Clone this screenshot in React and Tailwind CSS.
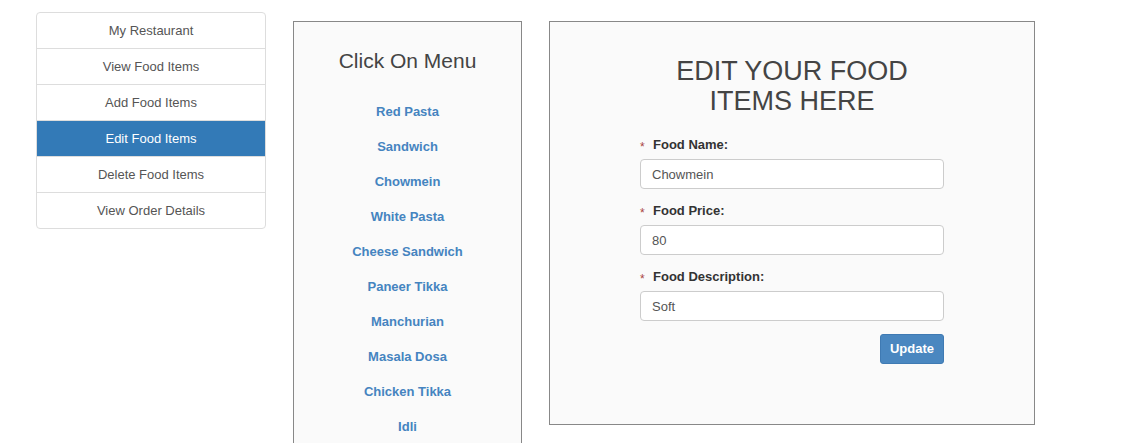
const navItems = ["My Restaurant", "View Food Items", "Add Food Items", "Edit Food Items", "Delete Food Items", "View Order Details"];

const menuItems = ["Red Pasta", "Sandwich", "Chowmein", "White Pasta", "Cheese Sandwich", "Paneer Tikka", "Manchurian", "Masala Dosa", "Chicken Tikka", "Idli"];

const Field = ({ label, value }) => {
  return (
    <div className="mb-[13px]">
      <label className="flex items-center h-[18px] mb-[5px] text-[13px] font-bold text-[#333]">
        <span className="text-[#a94442] font-normal w-[13px] text-[12px] leading-none mt-[3px]">*</span>
        {label}
      </label>
      <input
        readOnly
        value={value}
        className="w-[304px] h-[30px] px-[11px] text-[13px] text-[#555] bg-white border border-[#ccc] rounded-[4px] outline-none"
      />
    </div>
  );
};

export default function App() {
  return (
    <div className="min-h-[443px] bg-white overflow-hidden font-['Liberation_Sans',Arial,sans-serif] flex items-start">
      <div className="ml-[36px] mt-[12px] w-[230px] border border-[#ddd] rounded-[4px] overflow-hidden">
        {navItems.map((item, i) => (
          <div
            key={item}
            className={
              "h-[35px] flex items-center justify-center text-[13px] " +
              (i > 0 ? "border-t border-[#ddd] h-[36px] " : "") +
              (item === "Edit Food Items" ? "bg-[#337ab7] text-white border-[#337ab7]" : "text-[#555]")
            }
          >
            {item}
          </div>
        ))}
      </div>

      <div className="ml-[27px] mt-[21px] w-[229px] h-[440px] border border-[#888] bg-[#fafafa] flex flex-col items-center">
        <h3 className="mt-[26px] text-[21px] leading-[26px] text-[#444]">Click On Menu</h3>
        <div className="mt-[30px] flex flex-col items-center gap-[20px]">
          {menuItems.map((item) => (
            <a key={item} className="text-[13px] leading-[15px] font-bold text-[#4584c0] cursor-pointer">
              {item}
            </a>
          ))}
        </div>
      </div>

      <div className="ml-[27px] mt-[21px] w-[486px] h-[404px] border border-[#888] bg-[#fafafa] flex flex-col items-center">
        <h2 className="mt-[34px] text-[27px] leading-[30px] text-[#444] text-center">
          EDIT YOUR FOOD
          <br />
          ITEMS HERE
        </h2>
        <form className="mt-[20px] w-[304px]">
          <Field label="Food Name:" value="Chowmein" />
          <Field label="Food Price:" value="80" />
          <Field label="Food Description:" value="Soft" />
          <div className="flex justify-end">
            <button
              type="button"
              className="h-[30px] px-[9px] text-[13px] font-bold text-white bg-[#4a87c0] border border-[#3f7ab3] rounded-[3px]"
            >
              Update
            </button>
          </div>
        </form>
      </div>
    </div>
  );
}
